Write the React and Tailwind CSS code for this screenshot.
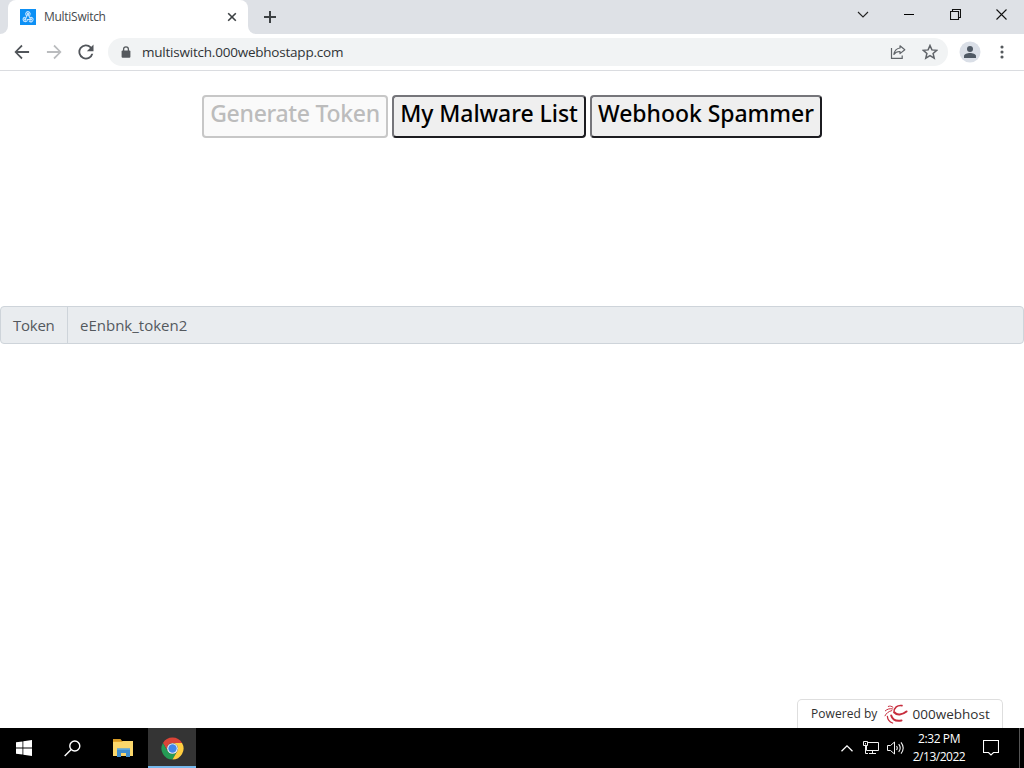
import React from "react";

function TabFavicon() {
  return (
    <svg className="h-4 w-4 shrink-0" viewBox="0 0 16 16">
      <rect width="16" height="16" fill="#0d90f5" />
      <g fill="none" stroke="#c4e3ff" strokeWidth="1.1" strokeLinecap="round">
        <path d="M6.2 6.3a2.2 2.2 0 1 1 3.6-.2M8 5l2 4.3M4.9 8.3a2.2 2.2 0 1 0 2.6 2.2h3M7.6 5.4 5.5 9.8M10.2 8.5a2.2 2.2 0 1 1-1 3.4" />
        <circle cx="5.2" cy="10.5" r=".6" />
        <circle cx="10.9" cy="10.5" r=".6" />
        <circle cx="8" cy="4.9" r=".6" />
      </g>
    </svg>
  );
}

function TabStrip() {
  return (
    <div className="flex h-[34px] bg-[#dee1e6]">
      <div className="flex w-2 bg-white">
        <div className="w-2 rounded-br-[8px] bg-[#dee1e6]" />
      </div>
      <div className="w-[240px] bg-[#dee1e6]">
        <div className="flex h-[34px] items-center rounded-t-[8px] bg-white pl-3 pr-[11px]">
          <TabFavicon />
          <span className="ml-2 whitespace-nowrap font-['Open_Sans','Noto_Sans',sans-serif] text-[12px] tracking-[-0.28px] text-[#45494d]">
            MultiSwitch
          </span>
          <svg className="ml-auto h-[10px] w-[10px]" viewBox="0 0 10 10">
            <path d="M1.2 1.2l7.6 7.6M8.8 1.2L1.2 8.8" stroke="#3c4043" strokeWidth="1.6" />
          </svg>
        </div>
      </div>
      <div className="flex w-2 bg-white">
        <div className="w-2 rounded-bl-[8px] bg-[#dee1e6]" />
      </div>
      <svg className="ml-[7px] mt-[10px] h-[14px] w-[14px]" viewBox="0 0 14 14">
        <path d="M7 1v12M1 7h12" stroke="#3c4043" strokeWidth="2" />
      </svg>
      <div className="ml-auto flex h-[29px] items-center">
        <div className="flex w-[46px] justify-center">
          <svg className="h-[12px] w-[12px]" viewBox="0 0 12 12">
            <path d="M1 3l5 5 5-5" fill="none" stroke="#222" strokeWidth="1.1" />
          </svg>
        </div>
        <div className="flex w-[46px] justify-center">
          <div className="h-px w-[10px] bg-black" />
        </div>
        <div className="flex w-[46px] justify-center">
          <svg className="h-[11px] w-[11px]" viewBox="0 0 11 11">
            <path d="M.5 2.5h8v8h-8zM2.5 2.5v-2h8v8h-2" fill="none" stroke="#111" strokeWidth="1.1" />
          </svg>
        </div>
        <div className="flex w-[46px] justify-center">
          <svg className="h-[11px] w-[11px]" viewBox="0 0 11 11">
            <path d="M.5.5l10 10M10.5.5l-10 10" stroke="#111" strokeWidth="1.1" />
          </svg>
        </div>
      </div>
    </div>
  );
}

function Toolbar() {
  return (
    <div className="flex h-[37px] items-center border-b border-[#dadce0] bg-white pl-3 pr-3">
      <svg className="h-5 w-5" viewBox="0 0 24 24" fill="#51555a">
        <path d="M20.5 10.9H6.8l5.9-5.9L11.3 3.4 2.9 12l8.4 8.6 1.4-1.6-5.9-5.9h13.7z" />
      </svg>
      <svg className="ml-3 h-5 w-5" viewBox="0 0 24 24" fill="#babcbe">
        <path d="M3.5 10.9h13.7L11.3 5l1.4-1.6 8.4 8.6-8.4 8.6-1.4-1.6 5.9-5.9H3.5z" />
      </svg>
      <svg className="ml-3 h-5 w-5" viewBox="0 0 24 24" fill="#51555a">
        <path d="M18.4 5.6A9 9 0 1 0 20.7 14h-2.3a6.8 6.8 0 1 1-1.6-6.8L13 11h8V3z" />
      </svg>
      <div className="ml-3 flex h-7 w-[840px] items-center rounded-full bg-[#f1f3f4] pl-[13px] pr-[10px]">
        <svg className="h-3 w-[10px]" viewBox="0 0 10 12">
          <path d="M2.6 5V3.3a2.4 2.4 0 0 1 4.8 0V5" fill="none" stroke="#55595d" strokeWidth="1.3" />
          <rect x=".6" y="4.5" width="8.8" height="7.3" rx="1" fill="#55595d" />
        </svg>
        <span className="ml-[11px] whitespace-nowrap pt-px font-['Open_Sans','Noto_Sans',sans-serif] text-[13.5px] tracking-[-0.22px] text-[#303336]">
          multiswitch.000webhostapp.com
        </span>
        <svg className="ml-auto h-4 w-4" viewBox="0 0 16 16" fill="none" stroke="#5f6368" strokeWidth="1.2">
          <path d="M1.5 4v10.4h10.7v-3" />
          <path d="M10 1.8l4.8 3.9L10 9.6V7.5C7.4 7.4 5.3 8.3 3.9 10.4 4.5 6.9 6.6 4.4 10 4z" strokeLinejoin="round" />
        </svg>
        <svg className="ml-4 h-4 w-4" viewBox="0 0 16 16">
          <path d="M8 1.5l1.9 4.4 4.8.4-3.6 3.2 1.1 4.7L8 11.7l-4.2 2.5 1.1-4.7-3.6-3.2 4.8-.4z" fill="none" stroke="#5f6368" strokeWidth="1.5" />
        </svg>
      </div>
      <svg className="ml-[11px] h-[22px] w-[22px]" viewBox="0 0 22 22">
        <circle cx="11" cy="11" r="10.5" fill="#dadfe7" />
        <circle cx="11" cy="8" r="3" fill="#4f5964" />
        <path d="M5 17v-1.8c0-2.1 3.5-3.1 6-3.1s6 1 6 3.1V17z" fill="#4f5964" />
      </svg>
      <svg className="ml-auto mr-[8px] h-4 w-[4px]" viewBox="0 0 4 16" fill="#55595d">
        <circle cx="2" cy="3" r="1.55" />
        <circle cx="2" cy="8" r="1.55" />
        <circle cx="2" cy="13" r="1.55" />
      </svg>
    </div>
  );
}

function HostBadge() {
  return (
    <div className="absolute bottom-0 right-[21px] flex h-[29px] w-[206px] items-center rounded-t-[5px] border border-b-0 border-[#dedede] bg-white pl-[13px] text-[#303030]">
      <span className="whitespace-nowrap font-['Open_Sans',sans-serif] text-[12px] tracking-[0.05px]">Powered by</span>
      <svg className="ml-[7px] h-5 w-6" viewBox="0 0 24 20" fill="none" stroke="#c72d3d" strokeLinecap="round">
        <path d="M18 1.6C13.5.8 9.8 3.8 10 8.4" strokeWidth="1.6" />
        <path d="M10.500 8.500C13 11.500 18 11 22.500 7.500" strokeWidth="2.100" />
        <path d="M7.200 11.500c1.200 4 5 6 10.300 5" strokeWidth="2" />
        <path d="M3.400 12.500c.2 3.200 2 5.300 5.200 6.500" strokeWidth="1.300" />
        <path d="M7.800 6.600C4.500 7.400 2.300 9.200 1 11.800M8.500 4.900C5.700 4.300 3.300 5 1.300 6.800M9 3.300C7.500 2 5.900 1.800 4.300 2.400" strokeWidth="1" />
      </svg>
      <span className="ml-1 whitespace-nowrap font-['Open_Sans',sans-serif] text-[13.5px] tracking-[0.02px]">000webhost</span>
    </div>
  );
}

function Page() {
  return (
    <main className="relative flex-1 bg-white pt-6">
      <div className="flex h-[43px] justify-center gap-1 font-['Noto_Sans','Open_Sans',sans-serif] text-[23px] font-medium leading-[29px]">
        <button disabled className="flex w-[186px] justify-center whitespace-nowrap rounded-[4px] border-2 border-[#c7c7c7] bg-[#fafafa] pt-[2px] tracking-[-0.3px] text-[#bcbcbc]">
          Generate Token
        </button>
        <button className="flex w-[194px] justify-center whitespace-nowrap rounded-[4px] border-2 border-b-[#1c1c20] border-l-[#75757a] border-r-[#1c1c20] border-t-[#75757a] bg-[#efefef] pt-[2px] tracking-[-0.05px] text-black">
          My Malware List
        </button>
        <button className="flex w-[232px] justify-center whitespace-nowrap rounded-[4px] border-2 border-b-[#1c1c20] border-l-[#75757a] border-r-[#1c1c20] border-t-[#75757a] bg-[#efefef] pt-[2px] tracking-[-0.05px] text-black">
          Webhook Spammer
        </button>
      </div>
      <div className="mt-[168px] flex h-[38px] items-center rounded-[4px] border border-[#ced4da] bg-[#e9ecef] font-['Open_Sans','Noto_Sans',sans-serif] text-[15px] text-[#54595e]">
        <span className="flex h-full w-[67px] items-center border-r border-[#ced4da] pl-3 tracking-[-0.25px]">Token</span>
        <span className="pl-3">eEnbnk_token2</span>
      </div>
      <HostBadge />
    </main>
  );
}

function Taskbar() {
  return (
    <footer className="flex h-10 items-center bg-black">
      <div className="flex w-12 justify-center">
        <svg className="h-4 w-4" viewBox="0 0 16 16" fill="#fff">
          <path d="M0 2.3L6.5 1.4V7.6H0zM7.3 1.3L16 0V7.6H7.3zM0 8.4H6.5V14.6L0 13.7zM7.3 8.4H16V16L7.3 14.7z" />
        </svg>
      </div>
      <div className="flex w-12 justify-center">
        <svg className="h-[17px] w-[17px]" viewBox="0 0 17 17" fill="none" stroke="#fff" strokeWidth="1.4">
          <circle cx="10.8" cy="6" r="5" />
          <path d="M7.2 9.5L.7 16.1" />
        </svg>
      </div>
      <div className="flex w-[52px] justify-center pl-[2px]">
        <svg className="h-[18px] w-[22px]" viewBox="0 0 22 18">
          <path d="M1 0h7.5l1.5 2H1z" fill="#d79b26" />
          <path d="M1 2h20v15H1z" fill="#fbd76b" />
          <path d="M1 3h9l1-1H1z" fill="#e4a72d" />
          <path d="M5 9.5h13V18h-4v-4H9v4H5z" fill="#3f8dce" />
          <path d="M5 9.5h13v1.3H5z" fill="#64aee2" />
          <path d="M9 14h5v3H9z" fill="#f8d46c" />
        </svg>
      </div>
      <div className="flex h-10 w-12 items-center justify-center border-b-2 border-[#76b9ed] bg-[#343434] pt-[2px]">
        <svg className="h-[23px] w-[23px]" viewBox="0 0 24 24">
          <path d="M2.04 6.25A11.5 11.5 0 0 1 21.96 6.25H12A5.75 5.75 0 0 0 7.02 14.88z" fill="#db4437" />
          <path d="M2.04 6.25A11.5 11.5 0 0 0 12 23.5L16.98 14.88A5.75 5.75 0 0 1 7.02 14.88z" fill="#259b55" />
          <path d="M12 6.25H21.96A11.5 11.5 0 0 1 12 23.5L16.98 14.88A5.75 5.75 0 0 0 12 6.25z" fill="#ffcd40" />
          <circle cx="12" cy="12" r="5.6" fill="#f3f5f8" />
          <circle cx="12" cy="12" r="4.4" fill="#4285e8" />
        </svg>
      </div>
      <div className="ml-auto flex h-10 items-center">
        <svg className="h-[7px] w-3" viewBox="0 0 12 7">
          <path d="M.5 6.2L6 .9l5.5 5.3" fill="none" stroke="#fff" strokeWidth="1.3" />
        </svg>
        <svg className="ml-[10px] h-[14px] w-4" viewBox="0 0 16 14" fill="none" stroke="#f2f2f2">
          <path d="M5 1.5h10.5v8H3.5V5M9.5 9.5v3M6 12.5h7M2.5 5v7.5H5M.5.5h4V4.500h-4zM2.500 2v1.500" />
        </svg>
        <svg className="ml-2 h-4 w-[18px]" viewBox="0 0 18 16" fill="none" stroke="#f2f2f2">
          <path d="M.5 5.500h3L7.500 2v12l-4-3.500h-3z" />
          <path d="M9.500 6q1.500 2 0 4M11.700 4.200q3 3.800 0 7.600M14 2.400q4.400 5.600 0 11.200" strokeWidth="1.100" />
        </svg>
        <div className="ml-[2px] flex w-[64px] flex-col items-center whitespace-nowrap font-['Open_Sans','Noto_Sans',sans-serif] text-[12px] leading-[18px] text-white">
          <span className="tracking-[-0.4px]">2:32 PM</span>
          <span className="tracking-[-0.48px]">2/13/2022</span>
        </div>
        <svg className="ml-3 mr-[20px] h-4 w-4" viewBox="0 0 16 16">
          <path d="M.5.5h15v12h-5L8 15l-2.500-2.500h-5z" fill="none" stroke="#fff" strokeWidth="1.100" />
        </svg>
        <div className="mr-1 h-10 w-px bg-[#555]" />
      </div>
    </footer>
  );
}

export default function App() {
  return (
    <div className="flex h-[768px] w-[1024px] flex-col overflow-hidden bg-white">
      <TabStrip />
      <Toolbar />
      <Page />
      <Taskbar />
    </div>
  );
}
